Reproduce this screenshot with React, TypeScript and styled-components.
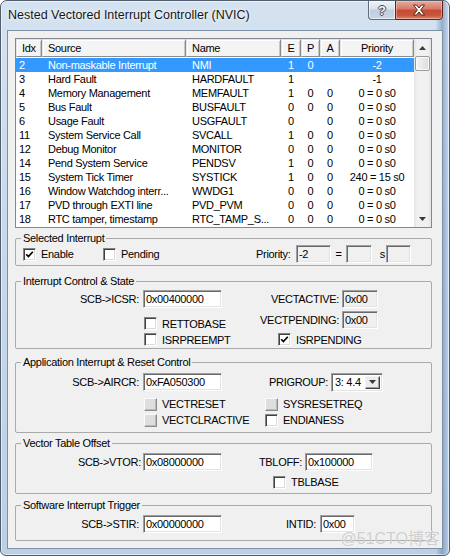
import styled, { createGlobalStyle } from 'styled-components';

const GlobalStyle = createGlobalStyle`
  html, body {
    margin: 0;
    padding: 0;
    background: #ffffff;
  }
  body {
    font-family: "Liberation Sans", Arial, sans-serif;
    font-size: 11px;
    letter-spacing: -0.3px;
    color: #000;
  }
`;

const Window = styled.div`
  position: relative;
  width: 450px;
  height: 556px;
  box-sizing: border-box;
  border: 1px solid #4f5d6d;
  border-radius: 7px 7px 6px 6px;
  background:
    linear-gradient(90deg, rgba(80, 120, 170, 0) 0%, rgba(80, 120, 170, 0) 97%, rgba(70, 110, 165, 0.45) 98.5%, rgba(190, 210, 235, 0.3) 100%),
    linear-gradient(180deg, #d4e2f0 0%, #c7d8eb 45%, #bccfe5 100%);
  box-shadow: inset 0 0 0 1px rgba(255, 255, 255, 0.55);
  display: flex;
  flex-direction: column;
  overflow: hidden;
`;

const TitleBar = styled.div`
  height: 29px;
  flex: none;
  display: flex;
  justify-content: space-between;
  align-items: flex-start;
`;

const Title = styled.div`
  padding: 7px 0 0 7px;
  font-size: 12.5px;
  letter-spacing: 0;
  line-height: 15px;
  color: #151515;
  text-shadow: 0 0 6px rgba(255, 255, 255, 0.9), 0 0 2px rgba(255, 255, 255, 0.9);
`;

const Caption = styled.div`
  display: flex;
  margin: -1px 6px 0 0;
`;

const HelpButton = styled.div`
  width: 27px;
  height: 20px;
  box-sizing: border-box;
  border: 1px solid #5d6b7c;
  border-right: none;
  border-radius: 0 0 0 4px;
  background: linear-gradient(180deg, #eef2f7 0%, #d9e2ec 45%, #bfcddd 50%, #c8d6e6 100%);
  box-shadow: inset 0 0 0 1px rgba(255, 255, 255, 0.6);
  display: flex;
  align-items: center;
  justify-content: center;
  font-weight: bold;
  font-size: 13px;
  letter-spacing: 0;
  color: #f4f6f9;
  text-shadow: 1px 0 0 #3d4a5b, -1px 0 0 #3d4a5b, 0 1px 0 #3d4a5b, 0 -1px 0 #3d4a5b;
`;

const CloseButton = styled.div`
  width: 48px;
  height: 20px;
  box-sizing: border-box;
  border: 1px solid #5b231b;
  border-radius: 0 0 4px 0;
  background: linear-gradient(180deg, #e8a99b 0%, #d7796a 45%, #c44a34 50%, #c9553b 80%, #dc8a6b 100%);
  box-shadow: inset 0 0 0 1px rgba(255, 220, 210, 0.45);
  display: flex;
  align-items: center;
  justify-content: center;
`;

const Client = styled.div`
  flex: 1;
  margin: 0 6px 6px;
  border: 1px solid #7e90a6;
  background: #f0f0f0;
  padding: 7px 10px 0 7px;
  display: flex;
  flex-direction: column;
`;

const cols = '26px 144px 95px 20px 19px 20px 74px';

const ListView = styled.div`
  height: 190px;
  flex: none;
  box-sizing: border-box;
  border: 1px solid #828790;
  background: #fff;
  display: flex;
`;

const ListBody = styled.div`
  flex: 1;
  display: flex;
  flex-direction: column;
  overflow: hidden;
`;

const HeaderRow = styled.div`
  display: grid;
  grid-template-columns: ${cols};
  height: 18px;
  margin-bottom: 1px;
`;

const HeaderCell = styled.div<{ $center?: boolean }>`
  box-sizing: border-box;
  border: 1px solid;
  border-color: #e2e2e2 #8c8c8c #8c8c8c #e2e2e2;
  box-shadow: inset 1px 1px 0 #fff, inset -1px 0 0 #c8c8c8;
  background: #f4f4f4;
  line-height: 16px;
  padding-left: ${p => (p.$center ? 0 : 5)}px;
  text-align: ${p => (p.$center ? 'center' : 'left')};
  white-space: nowrap;
  overflow: hidden;
`;

const Row = styled.div<{ $selected?: boolean }>`
  display: grid;
  grid-template-columns: ${cols};
  height: 14px;
  line-height: 14px;
  background: ${p => (p.$selected ? '#3399ff' : 'transparent')};
  color: ${p => (p.$selected ? '#fff' : '#000')};
`;

const Cell = styled.div<{ $center?: boolean; $pad?: number }>`
  padding-left: ${p => (p.$center ? 0 : p.$pad ?? 6)}px;
  text-align: ${p => (p.$center ? 'center' : 'left')};
  white-space: nowrap;
  overflow: hidden;
`;

const ScrollBar = styled.div`
  width: 17px;
  flex: none;
  display: flex;
  flex-direction: column;
  background: linear-gradient(90deg, #e4e4e4 0%, #f1f1f1 20%, #f1f1f1 80%, #e4e4e4 100%);
`;

const ScrollArrow = styled.div`
  height: 17px;
  flex: none;
  display: flex;
  align-items: center;
  justify-content: center;
`;

const Thumb = styled.div`
  height: 15px;
  margin: 0 1px;
  box-sizing: border-box;
  border: 1px solid #9a9a9a;
  border-radius: 2px;
  background: linear-gradient(90deg, #f4f4f4 0%, #e9e9e9 50%, #dcdcdc 100%);
  box-shadow: inset 0 0 0 1px #fbfbfb;
`;

const Track = styled.div`
  flex: 1;
`;

const Group = styled.fieldset<{ $top: number }>`
  margin: ${p => p.$top}px 0 0;
  padding: 0;
  border: 1px solid #a9a9a9;
  border-radius: 2px;
  min-width: 0;
  flex: none;
`;

const Legend = styled.legend`
  margin-left: 5px;
  padding: 0 2px;
  line-height: 13px;
  font-size: 11px;
`;

const FormGrid = styled.div<{ $cols: string; $rows: string; $pb?: number; $pl?: number }>`
  display: grid;
  grid-template-columns: ${p => p.$cols};
  grid-template-rows: ${p => p.$rows};
  align-items: center;
  padding: 0 0 ${p => p.$pb ?? 0}px ${p => p.$pl ?? 0}px;
`;

const Label = styled.div<{ $pr?: number; $left?: boolean; $center?: boolean }>`
  text-align: ${p => (p.$center ? 'center' : p.$left ? 'left' : 'right')};
  padding-right: ${p => p.$pr ?? 4}px;
  white-space: nowrap;
`;

const Field = styled.div<{ $readOnly?: boolean }>`
  height: 18px;
  box-sizing: border-box;
  border: 1px solid;
  border-color: #a0a0a0 #fff #fff #a0a0a0;
  box-shadow: inset 1px 1px 0 #696969, inset -1px -1px 0 #e3e3e3;
  background: ${p => (p.$readOnly ? '#f0f0f0' : '#fff')};
  padding-left: 2px;
  line-height: 16px;
  white-space: nowrap;
  overflow: hidden;
`;

const Select = styled.div`
  height: 19px;
  box-sizing: border-box;
  border: 1px solid;
  border-color: #a0a0a0 #fff #fff #a0a0a0;
  box-shadow: inset 1px 1px 0 #696969, inset -1px -1px 0 #e3e3e3;
  background: #fff;
  display: flex;
  padding: 2px;
`;

const SelectText = styled.span`
  flex: 1;
  line-height: 13px;
  padding-left: 1px;
`;

const DropButton = styled.span`
  width: 15px;
  box-sizing: border-box;
  border: 1px solid;
  border-color: #f4f4f4 #404040 #404040 #f4f4f4;
  box-shadow: inset -1px -1px 0 #a0a0a0;
  background: #ececec;
  display: flex;
  align-items: center;
  justify-content: center;
`;

const CheckItem = styled.label<{ $indent?: number; $low?: boolean }>`
  display: flex;
  align-items: center;
  gap: 5px;
  margin-left: ${p => p.$indent ?? 0}px;
  white-space: nowrap;
  justify-self: start;
  align-self: ${p => (p.$low ? 'end' : 'center')};
  margin-bottom: ${p => (p.$low ? 1 : 0)}px;
`;

const Box = styled.span<{ $grey?: boolean }>`
  width: 13px;
  height: 13px;
  flex: none;
  box-sizing: border-box;
  display: inline-flex;
  align-items: center;
  justify-content: center;
  border: 1px solid;
  border-color: ${p => (p.$grey ? '#fbfbfb #8d8d8d #8d8d8d #fbfbfb' : '#858585 #fff #fff #858585')};
  box-shadow: ${p =>
    p.$grey ? 'inset -1px -1px 0 #b9b9b9' : 'inset 1px 1px 0 #404040, inset -1px -1px 0 #dcdcdc'};
  background: ${p => (p.$grey ? '#dedede' : '#fff')};
`;

const Watermark = styled.div`
  position: absolute;
  right: 9px;
  bottom: 6px;
  font-family: "Liberation Sans", "Noto Sans CJK SC", sans-serif;
  font-size: 16px;
  letter-spacing: 0;
  color: rgba(190, 190, 190, 0.75);
  text-shadow: 0 0 1px rgba(255, 255, 255, 0.9);
  pointer-events: none;
`;

const CheckMark = () => (
  <svg width="9" height="9" viewBox="0 0 9 9">
    <polyline points="1.2,4.2 3.4,6.6 7.8,1.8" fill="none" stroke="#000" strokeWidth="1.7" />
  </svg>
);

const Check = ({
  text,
  checked,
  grey,
  indent,
  low,
}: {
  text: string;
  checked?: boolean;
  grey?: boolean;
  indent?: number;
  low?: boolean;
}) => (
  <CheckItem $indent={indent} $low={low}>
    <Box $grey={grey}>{checked && <CheckMark />}</Box>
    <span>{text}</span>
  </CheckItem>
);

const Arrow = ({ down }: { down?: boolean }) => (
  <svg width="7" height="4" viewBox="0 0 7 4">
    <polygon points={down ? '0,0 7,0 3.5,4' : '0,4 7,4 3.5,0'} fill="#3a3a3a" />
  </svg>
);

type Irq = [string, string, string, string, string, string, string];

const rows: Irq[] = [
  ['2', 'Non-maskable Interrupt', 'NMI', '1', '0', '', '-2'],
  ['3', 'Hard Fault', 'HARDFAULT', '1', '', '', '-1'],
  ['4', 'Memory Management', 'MEMFAULT', '1', '0', '0', '0 = 0 s0'],
  ['5', 'Bus Fault', 'BUSFAULT', '0', '0', '0', '0 = 0 s0'],
  ['6', 'Usage Fault', 'USGFAULT', '0', '', '0', '0 = 0 s0'],
  ['11', 'System Service Call', 'SVCALL', '1', '0', '0', '0 = 0 s0'],
  ['12', 'Debug Monitor', 'MONITOR', '0', '0', '0', '0 = 0 s0'],
  ['14', 'Pend System Service', 'PENDSV', '1', '0', '0', '0 = 0 s0'],
  ['15', 'System Tick Timer', 'SYSTICK', '1', '0', '0', '240 = 15 s0'],
  ['16', 'Window Watchdog interr...', 'WWDG1', '0', '0', '0', '0 = 0 s0'],
  ['17', 'PVD through EXTI line', 'PVD_PVM', '0', '0', '0', '0 = 0 s0'],
  ['18', 'RTC tamper, timestamp', 'RTC_TAMP_S...', '0', '0', '0', '0 = 0 s0'],
];

export default function App() {
  return (
    <>
      <GlobalStyle />
      <Window>
        <TitleBar>
          <Title>Nested Vectored Interrupt Controller (NVIC)</Title>
          <Caption>
            <HelpButton>?</HelpButton>
            <CloseButton>
              <svg width="14" height="12" viewBox="0 0 14 12">
                <path
                  d="M1.5 1 L4.5 1 L7 4 L9.5 1 L12.5 1 L8.7 6 L12.5 11 L9.5 11 L7 8 L4.5 11 L1.5 11 L5.3 6 Z"
                  fill="#fff"
                  stroke="#5a2318"
                  strokeWidth="1"
                  strokeLinejoin="round"
                />
              </svg>
            </CloseButton>
          </Caption>
        </TitleBar>

        <Client>
          <ListView>
            <ListBody>
              <HeaderRow>
                <HeaderCell>Idx</HeaderCell>
                <HeaderCell>Source</HeaderCell>
                <HeaderCell>Name</HeaderCell>
                <HeaderCell $center>E</HeaderCell>
                <HeaderCell $center>P</HeaderCell>
                <HeaderCell $center>A</HeaderCell>
                <HeaderCell $center>Priority</HeaderCell>
              </HeaderRow>
              {rows.map((r, i) => (
                <Row key={r[0]} $selected={i === 0}>
                  <Cell $pad={3}>{r[0]}</Cell>
                  <Cell>{r[1]}</Cell>
                  <Cell>{r[2]}</Cell>
                  <Cell $center>{r[3]}</Cell>
                  <Cell $center>{r[4]}</Cell>
                  <Cell $center>{r[5]}</Cell>
                  <Cell $center>{r[6]}</Cell>
                </Row>
              ))}
            </ListBody>
            <ScrollBar>
              <ScrollArrow>
                <Arrow />
              </ScrollArrow>
              <Thumb />
              <Track />
              <ScrollArrow>
                <Arrow down />
              </ScrollArrow>
            </ScrollBar>
          </ListView>

          <Group $top={4}>
            <Legend>Selected Interrupt</Legend>
            <FormGrid $cols="80px 153px 40px 35px 15px 26px 14px 25px" $rows="18px" $pb={2} $pl={7}>
              <Check text="Enable" checked />
              <Check text="Pending" />
              <Label $left $pr={0}>Priority:</Label>
              <Field $readOnly>-2</Field>
              <Label $center $pr={0}>=</Label>
              <Field $readOnly />
              <Label $pr={1}>s</Label>
              <Field $readOnly />
            </FormGrid>
          </Group>

          <Group $top={9}>
            <Legend>Interrupt Control &amp; State</Legend>
            <FormGrid $cols="127px 79px 120px 36px" $rows="21px 22px 17px">
              <Label>SCB-&gt;ICSR:</Label>
              <Field>0x00400000</Field>
              <Label $pr={3}>VECTACTIVE:</Label>
              <Field $readOnly>0x00</Field>

              <span />
              <Check text="RETTOBASE" indent={1} low />
              <Label $pr={3}>VECTPENDING:</Label>
              <Field $readOnly>0x00</Field>

              <span />
              <Check text="ISRPREEMPT" indent={1} />
              <Check text="ISRPENDING" checked indent={56} />
              <span />
            </FormGrid>
          </Group>

          <Group $top={7}>
            <Legend>Application Interrupt &amp; Reset Control</Legend>
            <FormGrid $cols="127px 79px 109px 52px" $rows="26px 18px 14px" $pb={5}>
              <Label>SCB-&gt;AIRCR:</Label>
              <Field>0xFA050300</Field>
              <Label $pr={3}>PRIGROUP:</Label>
              <Select>
                <SelectText>3: 4.4</SelectText>
                <DropButton>
                  <Arrow down />
                </DropButton>
              </Select>

              <span />
              <Check text="VECTRESET" grey indent={1} />
              <Check text="SYSRESETREQ" grey indent={43} />
              <span />

              <span />
              <Check text="VECTCLRACTIVE" grey indent={1} />
              <Check text="ENDIANESS" indent={43} />
              <span />
            </FormGrid>
          </Group>

          <Group $top={4}>
            <Legend>Vector Table Offset</Legend>
            <FormGrid $cols="127px 79px 83px 68px" $rows="24px 16px" $pb={3}>
              <Label $pr={2}>SCB-&gt;VTOR:</Label>
              <Field>0x08000000</Field>
              <Label $pr={3}>TBLOFF:</Label>
              <Field>0x100000</Field>

              <span />
              <span />
              <Check text="TBLBASE" indent={51} />
              <span />
            </FormGrid>
          </Group>

          <Group $top={5}>
            <Legend>Software Interrupt Trigger</Legend>
            <FormGrid $cols="127px 79px 98px 35px" $rows="23px" $pb={5}>
              <Label>SCB-&gt;STIR:</Label>
              <Field>0x00000000</Field>
              <Label>INTID:</Label>
              <Field>0x00</Field>
            </FormGrid>
          </Group>
        </Client>
        <Watermark>@51CTO博客</Watermark>
      </Window>
    </>
  );
}
